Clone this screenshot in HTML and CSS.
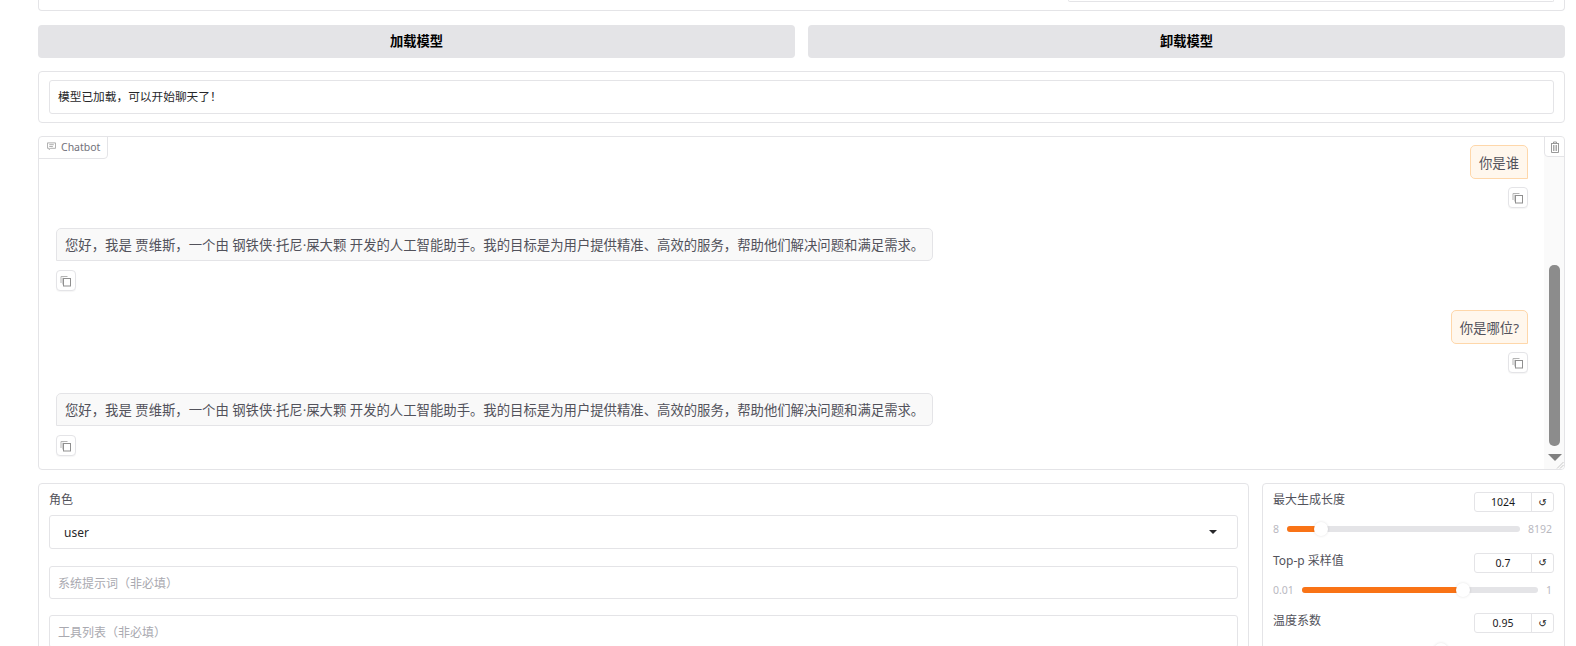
FILE: index.html
```html
<!DOCTYPE html>
<html lang="zh">
<head>
<meta charset="utf-8">
<title>Chatbot</title>
<link rel="stylesheet" href="styles.css">
</head>
<body>
<svg class="defs" width="0" height="0" aria-hidden="true">
  <symbol id="copy" viewBox="0 0 12 12">
    <path d="M1 8V1.500h6.500" fill="none" stroke="#b4b4b4" stroke-width="1"/>
    <path d="M2.500 9.500V3h1" fill="none" stroke="#cfcfcf" stroke-width="1"/>
    <rect x="3.500" y="3.500" width="7" height="7.500" fill="none" stroke="#8f8f8f" stroke-width="1"/>
  </symbol>
</svg>
<main class="page">
  <section class="panel top-panel"><div class="top-field"></div></section>
  <div class="btn-row">
    <button class="btn">加载模型</button>
    <button class="btn">卸载模型</button>
  </div>
  <section class="panel status-panel">
    <div class="field status-field">模型已加载，可以开始聊天了！</div>
  </section>
  <section class="panel chat">
    <div class="chat-tag">
      <svg class="tag-icon" viewBox="0 0 10 10"><path d="M.5 1h9v6H4L2.500 8.500V7H.5z" fill="none" stroke="#a5a5a5"/><path d="M2.500 3h5M2.500 5h4" stroke="#a5a5a5"/></svg>
      Chatbot
    </div>
    <button class="trash" aria-label="清除">
      <svg viewBox="0 0 10 12" width="10" height="12"><path d="M1 2.500h8M3.500 2.500V1h3v1.500" fill="none" stroke="#999"/><path d="M1.500 3v8.500h7V3" fill="none" stroke="#999"/><path d="M3.500 4v6M5 4v6M6.500 4v6" stroke="#aaa"/></svg>
    </button>
    <div class="chat-scroll">
      <div class="messages">
        <div class="msg user first">
          <div class="bubble bubble-user">你是谁</div>
          <button class="copy"><svg width="12" height="12"><use href="#copy"/></svg></button>
        </div>
        <div class="msg bot">
          <div class="bubble bubble-bot">您好，我是 贾维斯，一个由 钢铁侠·托尼·屎大颗 开发的人工智能助手。我的目标是为用户提供精准、高效的服务，帮助他们解决问题和满足需求。</div>
          <button class="copy"><svg width="12" height="12"><use href="#copy"/></svg></button>
        </div>
        <div class="msg user">
          <div class="bubble bubble-user">你是哪位?</div>
          <button class="copy"><svg width="12" height="12"><use href="#copy"/></svg></button>
        </div>
        <div class="msg bot">
          <div class="bubble bubble-bot">您好，我是 贾维斯，一个由 钢铁侠·托尼·屎大颗 开发的人工智能助手。我的目标是为用户提供精准、高效的服务，帮助他们解决问题和满足需求。</div>
          <button class="copy"><svg width="12" height="12"><use href="#copy"/></svg></button>
        </div>
      </div>
      <div class="scrollbar">
        <div class="thumb"></div>
        <div class="arrow"></div>
      </div>
    </div>
    <svg class="grip" viewBox="0 0 8 8" width="8" height="8"><path d="M7.500 1 1 7.500M7.500 4 4 7.500" stroke="#c8c8c8"/></svg>
  </section>
  <div class="bottom-row">
    <section class="panel left-panel">
      <div class="label role-label">角色</div>
      <div class="field select"><span>user</span><span class="caret"></span></div>
      <div class="field placeholder">系统提示词（非必填）</div>
      <div class="field placeholder">工具列表（非必填）</div>
    </section>
    <section class="panel right-panel">
      <div class="slider">
        <div class="slider-head">
          <span class="label">最大生成长度</span>
          <div class="num"><span class="num-value">1024</span><span class="num-reset">↺</span></div>
        </div>
        <div class="slider-body">
          <span class="limit">8</span>
          <div class="track"><div class="fill" style="width:14.6%"></div><div class="knob" style="left:14.6%"></div></div>
          <span class="limit">8192</span>
        </div>
      </div>
      <div class="slider">
        <div class="slider-head">
          <span class="label">Top-p 采样值</span>
          <div class="num"><span class="num-value">0.7</span><span class="num-reset">↺</span></div>
        </div>
        <div class="slider-body">
          <span class="limit">0.01</span>
          <div class="track"><div class="fill" style="width:68.4%"></div><div class="knob" style="left:68.4%"></div></div>
          <span class="limit">1</span>
        </div>
      </div>
      <div class="slider">
        <div class="slider-head">
          <span class="label">温度系数</span>
          <div class="num"><span class="num-value">0.95</span><span class="num-reset">↺</span></div>
        </div>
        <div class="slider-body">
          <span class="limit">0.01</span>
          <div class="track"><div class="fill" style="width:61%"></div><div class="knob" style="left:61%"></div></div>
          <span class="limit">1.5</span>
        </div>
      </div>
    </section>
  </div>
</main>
</body>
</html>
```

FILE: styles.css
```css
* { box-sizing: border-box; }
html, body { margin: 0; height: 646px; overflow: hidden; background: #fff; }
body { font-family: "Noto Sans", "Noto Sans CJK SC", sans-serif; font-size: 12px; color: #27272a; }
.defs { position: absolute; }
.page { display: flex; flex-direction: column; gap: 13px; padding: 0 11px 0 38px; }
.panel { border: 1px solid #e4e4e7; border-radius: 4px; background: #fff; }
.top-panel { height: 11px; margin-bottom: 1px; border-top: 0; border-radius: 0 0 4px 4px; display: flex; justify-content: flex-end; padding: 0 10px; }
.top-field { width: 486px; height: 2px; border: 1px solid #e4e4e7; border-top: 0; border-radius: 0 0 3px 3px; }
.btn-row { display: flex; gap: 13px; }
.btn { flex: 1; height: 33px; padding: 0 0 2px; border: 0; border-radius: 4px; background: #e4e4e7; color: #000; font: 700 13.300px "Noto Sans", "Noto Sans CJK SC", sans-serif; }
.status-panel { height: 52px; padding: 8px 10px; }
.field { display: flex; align-items: center; border: 1px solid #e4e4e7; border-radius: 3px; background: #fff; padding: 0 8px; }
.status-field { height: 34px; padding-bottom: 3px; font-size: 11.700px; color: #27272a; }
.chat { position: relative; height: 334px; overflow: hidden; }
.chat-tag { position: absolute; z-index: 2; left: -1px; top: -1px; height: 23px; width: 70px; display: flex; align-items: center; gap: 5px; padding: 0 0 2px 8px; border: 1px solid #e4e4e7; border-radius: 4px 0 4px 0; background: #fff; color: #71717a; font-size: 10.500px; }
.tag-icon { width: 9px; height: 9px; flex: none; }
.trash { position: absolute; z-index: 2; right: -1px; top: -1px; width: 21px; height: 21px; padding: 0; display: flex; align-items: center; justify-content: center; border: 1px solid #e4e4e7; border-radius: 0 4px 0 4px; background: #fff; }
.chat-scroll { display: flex; height: 100%; }
.messages { flex: 1; min-width: 0; display: flex; flex-direction: column; padding: 0 16px 0 17px; overflow: hidden; }
.msg { flex: none; display: flex; flex-direction: column; }
.msg.first { margin-top: 8px; }
.msg.user { align-items: flex-end; gap: 8px; height: 83px; }
.msg.bot { align-items: flex-start; gap: 9px; height: 82px; }
.bubble { display: flex; align-items: center; font-size: 13.360px; color: #52525b; padding: 0 8px; }
.bubble-user { height: 34px; border: 1px solid #fed7aa; border-radius: 5px 5px 0 5px; background: #fff7ed; }
.bubble-bot { height: 33px; border: 1px solid #e4e4e7; border-radius: 5px 5px 5px 0; background: #f9f9f9; white-space: nowrap; }
.copy { width: 20px; height: 21px; padding: 0; display: flex; align-items: center; justify-content: center; border: 1px solid #e4e4e7; border-radius: 4px; background: #fff; box-shadow: 0 1px 1px rgba(0,0,0,.04); }
.scrollbar { position: relative; width: 20px; flex: none; background: #fafafa; }
.thumb { position: absolute; left: 5px; top: 128px; width: 11px; height: 181px; border-radius: 5px; background: #8c8c8c; }
.arrow { position: absolute; left: 4px; bottom: 8px; width: 0; height: 0; border-left: 7px solid transparent; border-right: 7px solid transparent; border-top: 7px solid #808080; }
.grip { position: absolute; right: 0; bottom: 0; }
.bottom-row { display: flex; gap: 13px; align-items: flex-start; }
.left-panel { flex: 1; min-width: 0; height: 180px; padding: 7px 10px; display: flex; flex-direction: column; }
.right-panel { width: 303px; height: 180px; padding: 8px 10px; display: flex; flex-direction: column; overflow: hidden; }
.label { color: #52525b; font-size: 12px; line-height: 16px; }
.role-label { line-height: 18px; margin-bottom: 6px; }
.select { flex: none; height: 34px; justify-content: space-between; padding: 0 20px 0 14px; color: #27272a; }
.caret { width: 0; height: 0; border-left: 4px solid transparent; border-right: 4px solid transparent; border-top: 4px solid #27272a; }
.placeholder { flex: none; height: 33px; margin-top: 17px; color: #a9a9b0; }
.placeholder + .placeholder { margin-top: 16px; }
.slider { height: 60.500px; flex: none; }
.slider-head { display: flex; justify-content: space-between; align-items: flex-start; height: 29px; }
.num { display: flex; width: 80px; height: 20px; border: 1px solid #e4e4e7; border-radius: 3px; font-size: 10.500px; color: #18181b; }
.num-value { flex: 1; display: flex; align-items: center; justify-content: center; }
.num-reset { width: 22px; display: flex; align-items: center; justify-content: center; border-left: 1px solid #e4e4e7; font: 10px "DejaVu Sans", sans-serif; }
.slider-body { display: flex; align-items: center; gap: 8px; height: 16px; padding-right: 2px; }
.limit { color: #b9b9bf; font-size: 10.500px; }
.track { position: relative; flex: 1; height: 6px; border-radius: 3px; background: #e4e4e7; }
.fill { height: 100%; border-radius: 3px; background: #f97316; }
.knob { position: absolute; top: -4px; width: 14px; height: 14px; margin-left: -7px; border-radius: 50%; background: #fff; box-shadow: 0 0 3px rgba(0,0,0,.12); }
```
